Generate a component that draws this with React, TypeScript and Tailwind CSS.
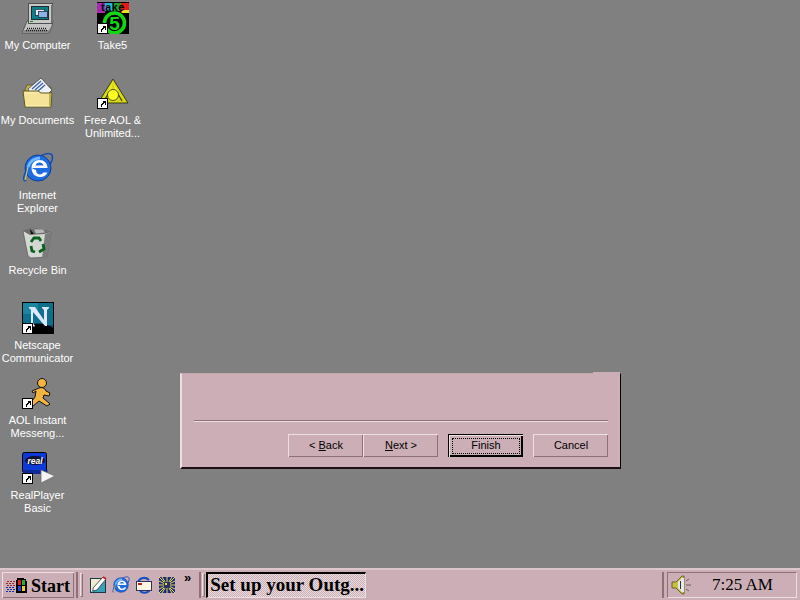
import React from "react";

const Arrow = () => (
  <g shapeRendering="crispEdges">
    <rect x="0" y="21" width="11" height="11" fill="#000" />
    <rect x="1" y="22" width="9" height="9" fill="#fff" />
    <path d="M5 24h4v4h-1v-2h-1v1h-1v1h-1v2h-1v-3h1v-1h1v-1h1z" fill="#000" />
  </g>
);

const Computer = () => (
  <svg width="32" height="32" viewBox="0 0 32 32">
    <path d="M5 19h26l-1 5-3 7H0l3-7z" fill="#c4c4c4" stroke="#404040" strokeWidth=".8" />
    <path d="M1 30h26l3-6v-1l-3 5H2z" fill="#8a8a8a" />
    <path d="M5 26.500h20M4 28.500h21" stroke="#1a1a1a" strokeWidth="1.300" strokeDasharray="1 1" />
    <g shapeRendering="crispEdges">
      <rect x="6" y="1" width="24" height="20" fill="#c8c8c8" stroke="#505050" />
      <rect x="29" y="3" width="2" height="18" fill="#707070" />
      <rect x="9" y="4" width="18" height="14" fill="#202830" />
      <rect x="10" y="5" width="16" height="12" fill="#08808a" />
      <rect x="13" y="7" width="9" height="6" fill="#e8f0f8" stroke="#203040" strokeWidth=".8" />
      <rect x="16" y="9" width="9" height="6" fill="#8fb0e8" stroke="#203040" strokeWidth=".8" />
      <rect x="8" y="19" width="3" height="1" fill="#109010" />
    </g>
  </svg>
);

const Take5 = () => (
  <svg width="32" height="32" viewBox="0 0 32 32">
    <rect width="32" height="32" fill="#000" />
    <g shapeRendering="crispEdges">
      <rect x="0" y="1" width="8" height="10" fill="#a828b0" />
      <rect x="8" y="1" width="8" height="8" fill="#18b8d8" />
      <rect x="16" y="1" width="8" height="8" fill="#20a030" />
      <rect x="24" y="1" width="8" height="10" fill="#e81818" />
      <rect x="25" y="8" width="7" height="3" fill="#f0e020" />
    </g>
    <text x="16" y="9" textAnchor="middle" fontFamily="Liberation Sans" fontWeight="700" fontSize="10.500" letterSpacing="0.800" fill="#000">take</text>
    <circle cx="17.500" cy="21" r="11" fill="#000" />
    <circle cx="17.500" cy="21" r="10" fill="none" stroke="#12d812" strokeWidth="3.600" />
    <text x="17.500" y="28" textAnchor="middle" fontFamily="Liberation Sans" fontWeight="700" fontSize="19" fill="#12d812">5</text>
    <Arrow />
  </svg>
);

const Folder = () => (
  <svg width="32" height="32" viewBox="0 0 32 32">
    <path d="M3 13 5 8h7l2 2h15v6H3z" fill="#c9b34a" stroke="#4a4a20" strokeWidth=".7" />
    <path d="M6 12 19 1l11 12-5 5H8z" fill="#eef2fa" stroke="#404040" strokeWidth=".8" />
    <path d="M10 12 19 4M13 13l8-7M16 14l7-6" stroke="#3a5ea8" strokeWidth="1.300" />
    <path d="M1 14h15l3 2h11l-1 14H3z" fill="#f5e39a" stroke="#5e5818" strokeWidth="1" />
    <path d="M3 16h12M4 29h24" stroke="#fff4c0" strokeWidth=".8" />
    <path d="M28 17v12" stroke="#9a8a28" strokeWidth="1.200" />
  </svg>
);

const Aol = () => (
  <svg width="32" height="32" viewBox="0 0 32 32">
    <path d="M16 2 31 26H1z" fill="#d8d810" stroke="#38381a" strokeWidth="1" />
    <path d="M16 5 7 21l6-5zM16 5l9 16-6-5z" fill="#f0f030" />
    <path d="M7 24l5-9M25 24l-5-9" stroke="#3a3a10" strokeWidth="1.200" fill="none" />
    <circle cx="16" cy="18" r="5.500" fill="#ffff20" stroke="#404020" strokeWidth=".9" />
    <Arrow />
  </svg>
);

const Ie = ({ s = 32 }: { s?: number }) => (
  <svg width={s} height={s} viewBox="0 0 32 32">
    <path d="M4 28C0 31 1 22 8 13S25 0 29 2c3 2 1 8-2 12" fill="none" stroke="#1850b8" strokeWidth="1.600" />
    <circle cx="16" cy="16" r="13" fill="#1f6ce0" stroke="#0c3ca0" strokeWidth="1" />
    <path d="M6 15c2-6 7-9 12-9" fill="none" stroke="#70b8ff" strokeWidth="3" />
    <path d="M9.500 16h16c0-5-3.500-8-8-8s-8 3.500-8 8zM13.500 13.500c.5-2 2.200-3 4-3s3.500 1 4 3z" fill="#fff" fillRule="evenodd" />
    <path d="M9.500 16c0 5 3.500 9 8.500 9 3.500 0 6-1.500 7.500-4.500h-4c-1 1.200-2 2-3.500 2-2.500 0-4-2-4-4.500z" fill="#fff" />
    <path d="M3 28l3-13" stroke="#d8d860" strokeWidth="1" />
  </svg>
);

const Bin = () => (
  <svg width="32" height="32" viewBox="0 0 32 32">
    <path d="M1 4 10 1 29 5 25 30 9 31 6 29z" fill="#d4d8d4" stroke="#585858" strokeWidth=".7" />
    <path d="M29 5 25 30 20 31 23 7z" fill="#7c7c7c" />
    <path d="M1 4 9 1.500l20 3.500-7 2-14 1z" fill="#6c6c6c" />
    <path d="M8 2l4 5H9z" fill="#0c0c0c" />
    <path d="M12 2.500h9l2 3-9 1z" fill="#b8b8b8" />
    <path d="M9 15l3-4 5 0 2 3M21 17l1 5-5 3M13 25l-3-1-1-5" fill="none" stroke="#08601c" strokeWidth="2.800" />
  </svg>
);

const Netscape = () => (
  <svg width="32" height="32" viewBox="0 0 32 32">
    <rect x=".5" y=".5" width="31" height="31" fill="#0c4a80" stroke="#000" />
    <rect x="1" y="1" width="30" height="22" fill="#0e6f8c" />
    <rect x="1" y="1" width="15" height="11" fill="#1a86a0" />
    <path d="M1 26c8-6 22-6 30 0v5H1z" fill="#000" />
    <path d="M7 5h6l9 13V8l-2-2V5h7v1l-2 2v16h-2L11 10v11l2 3v.500H7V24l2-3V8L7 6z" fill="#dfe6ff" />
    <Arrow />
  </svg>
);

const Aim = () => (
  <svg width="32" height="32" viewBox="0 0 32 32">
    <circle cx="20" cy="6" r="4.500" fill="#f4b440" stroke="#111" strokeWidth="1" />
    <path d="M17 11c3-1 6 0 7 3l4 2-1 3-5-1-1 3 6 5 1 1-3 2-8-5-7 6-3-2 6-8 1-6-3 2-1-2z" fill="#f4b440" stroke="#111" strokeWidth="1" />
    <Arrow />
  </svg>
);

const Real = () => (
  <svg width="32" height="32" viewBox="0 0 32 32">
    <rect x=".5" y=".5" width="24" height="20" rx="2" fill="#0c3ad8" stroke="#000" />
    <rect x="1.500" y="18" width="24" height="4" fill="#0c2a98" />
    <ellipse cx="13" cy="8.500" rx="10" ry="4.500" fill="#101030" />
    <text x="13" y="11.500" textAnchor="middle" fontFamily="Liberation Sans" fontStyle="italic" fontWeight="700" fontSize="8.500" fill="#fff">real</text>
    <path d="M19 18v13l14-7z" fill="#f4f4f4" stroke="#707070" strokeWidth=".8" />
    <Arrow />
  </svg>
);

const WinFlag = () => (
  <svg width="22" height="16" viewBox="0 0 22 16">
    <g shapeRendering="crispEdges">
      <path d="M1 3h2v1H1zM4 3h2v1H4zM7 3h2v1H7zM0 5h2v1H0zM3 5h2v1H3zM6 5h2v1H6zM1 7h2v1H1zM4 7h2v1H4zM7 7h2v1H7z" fill="#a02828" />
      <path d="M0 9h2v1H0zM3 9h2v1H3zM6 9h2v1H6zM1 11h2v1H1zM4 11h2v1H4zM7 11h2v1H7zM0 13h2v1H0zM3 13h2v1H3zM6 13h2v1H6z" fill="#1830a0" />
      <path d="M11 0h7v1h2v2h1v12H10V2h1z" fill="#000" />
      <rect x="12" y="2" width="3" height="5" fill="#e02020" />
      <rect x="16" y="2" width="3" height="5" fill="#20b020" />
      <rect x="12" y="8" width="3" height="5" fill="#2040e0" />
      <rect x="16" y="8" width="3" height="5" fill="#f0d020" />
    </g>
  </svg>
);

const QuickEdit = () => (
  <svg width="18" height="18" viewBox="0 0 18 18">
    <rect x="1.500" y="2.500" width="15" height="14" fill="#f2ecd0" stroke="#183848" />
    <path d="M2 16 16 5v11z" fill="#38a0b8" />
    <path d="M4 12 14 1l3 2-9 11-4 1z" fill="#fff" stroke="#303030" strokeWidth=".8" />
    <path d="M14 1l3 2" stroke="#d02020" strokeWidth="2" />
  </svg>
);

const QuickMail = () => (
  <svg width="18" height="18" viewBox="0 0 18 18">
    <path d="M3 8c0-6 7-8 11-4" fill="none" stroke="#1850c0" strokeWidth="2.200" />
    <path d="M15 12c0 5-7 6-10 3" fill="none" stroke="#1850c0" strokeWidth="2.200" />
    <rect x="1.500" y="5.500" width="15" height="9" fill="#fff8e0" stroke="#303060" />
    <rect x="3" y="7" width="4" height="2" fill="#c02020" />
  </svg>
);

const QuickStar = () => (
  <svg width="18" height="18" viewBox="0 0 18 18">
    <rect x="1" y="1" width="16" height="16" fill="#1a2a80" />
    <path d="M1 1l16 16M17 1 1 17M9 1v16M1 9h16M4 1l10 16M14 1 4 17M1 5l16 8M1 13l16-8" stroke="#e8e040" strokeWidth="1" />
    <rect x="6" y="6" width="6" height="6" fill="#303060" />
    <rect x="7" y="7" width="2" height="2" fill="#e8e040" />
  </svg>
);

const Speaker = () => (
  <svg width="22" height="22" viewBox="0 0 22 22">
    <path d="M1 8h4l6-6h2v18h-2l-6-6H1z" fill="#c8c040" stroke="#505020" strokeWidth=".8" />
    <path d="M7 8l4-4h2v14h-2l-4-4z" fill="#e8e8e8" />
    <path d="M9 7h1v8H9z" fill="#303030" />
    <path d="M15 7l3-2M15 11h5M15 15l3 2" stroke="#606060" strokeWidth="1" />
  </svg>
);

const desktopIcons: { icon: React.ReactNode; label: string[] }[] = [
  { icon: <Computer />, label: ["My Computer"] },
  { icon: <Folder />, label: ["My Documents"] },
  { icon: <Ie />, label: ["Internet", "Explorer"] },
  { icon: <Bin />, label: ["Recycle Bin"] },
  { icon: <Netscape />, label: ["Netscape", "Communicator"] },
  { icon: <Aim />, label: ["AOL Instant", "Messeng..."] },
  { icon: <Real />, label: ["RealPlayer", "Basic"] },
  { icon: <Take5 />, label: ["Take5"] },
  { icon: <Aol />, label: ["Free AOL &", "Unlimited..."] },
];

const btn =
  "h-[23px] w-[75px] pb-[1px] flex items-center justify-center text-[11px] text-black border-t border-l border-[#ecdfe2] border-r-[#000] border-b-[#000] shadow-[inset_-1px_-1px_0_#8f6f78]";

export default function App() {
  return (
    <div
      className="w-[800px] h-[600px] overflow-hidden flex flex-col bg-[#808080] relative"
      style={{ fontFamily: '"Liberation Sans", Arial, sans-serif' }}
    >
      <div className="flex-1 min-h-0 grid grid-flow-col grid-rows-[repeat(7,75px)] grid-cols-[75px_75px] justify-start">
        {desktopIcons.map((d) => (
          <div key={d.label[0]} className="flex flex-col items-center pt-[2px]">
            <div className="w-8 h-8 shrink-0">{d.icon}</div>
            <div className="mt-[5px] text-[11px] leading-[13px] text-white text-center whitespace-nowrap">
              {d.label.map((l) => (
                <div key={l}>{l}</div>
              ))}
            </div>
          </div>
        ))}
      </div>

      <div className="absolute left-[180px] top-[373px] w-[441px] h-[96px] bg-[#ccafb6] border-l-2 border-l-[#ecdfe2] border-t border-t-[#c4a6ad] border-r border-r-black border-b-2 border-b-[#1a0f12] flex flex-col px-3">
        <div className="absolute right-0 top-[-2px] w-[27px] h-[2px] bg-[#ccafb6]" />
        <div className="mt-[46px] h-[2px] border-t border-t-[#8f6f78] border-b border-b-[#ecdfe2]" />
        <div className="mt-3 flex justify-end">
          <div className="flex">
            <button className={btn}>
              <span>&lt; <u>B</u>ack</span>
            </button>
            <button className={btn}>
              <span><u>N</u>ext &gt;</span>
            </button>
          </div>
          <button className={`${btn} ml-[10px] border-black outline-none relative shadow-[inset_1px_1px_0_#ecdfe2,inset_-2px_-2px_0_#000]`}>
            <span className="absolute inset-[3px] border border-dotted border-black" />
            <span>Finish</span>
          </button>
          <button className={`${btn} ml-[10px]`}>Cancel</button>
        </div>
      </div>

      <div className="h-8 shrink-0 bg-[#ccafb6] border-t-2 border-t-[#dcc7cc] flex items-center pl-[2px] pr-[3px]">
        <button className="h-[26px] w-[72px] flex items-center gap-[3px] pl-[3px] border-t border-l border-[#ecdfe2] border-r-black border-b-black shadow-[inset_-1px_-1px_0_#8f6f78] text-[18px] font-bold leading-none text-black" style={{ fontFamily: '"Liberation Serif", serif' }}>
          <WinFlag />
          Start
        </button>
        <div className="ml-[2px] w-[2px] h-[26px] bg-[#8f6f78]" />
        <div className="ml-[2px] w-[3px] h-[24px] border border-[#ecdfe2] border-r-[#8f6f78] border-b-[#8f6f78]" />
        <div className="ml-[6px] flex items-center gap-[5px]">
          <QuickEdit />
          <Ie s={18} />
          <QuickMail />
          <QuickStar />
        </div>
        <div className="ml-[8px] self-start mt-[1px] text-[13px] font-bold leading-none text-black">»</div>
        <div className="ml-[8px] w-[2px] h-[26px] bg-[#8f6f78]" />
        <div className="ml-[1px] w-[3px] h-[24px] border border-[#ecdfe2] border-r-[#8f6f78] border-b-[#8f6f78]" />
        <div
          className="ml-[1px] h-[26px] w-[160px] flex items-center pl-[2px] border-t-2 border-l-2 border-black border-r border-b border-r-[#ecdfe2] border-b-[#ecdfe2] text-[19px] font-bold whitespace-nowrap bg-[length:2px_2px] bg-[repeating-conic-gradient(#e8dcdf_0_25%,#ccafb6_0_50%)] text-black"
          style={{ fontFamily: '"Liberation Serif", serif' }}
        >
          Set up your Outg...
        </div>
        <div className="flex-1" />
        <div className="w-[2px] h-[26px] bg-[#8f6f78]" />
        <div className="w-[130px] h-[26px] ml-[3px] flex items-center pl-[3px] border border-t-[#8f6f78] border-l-[#8f6f78] border-r-[#ecdfe2] border-b-[#ecdfe2]">
          <Speaker />
          <span className="ml-[19px] text-[17px] text-black whitespace-nowrap" style={{ fontFamily: '"Liberation Serif", serif' }}>
            7:25 AM
          </span>
        </div>
      </div>
    </div>
  );
}
